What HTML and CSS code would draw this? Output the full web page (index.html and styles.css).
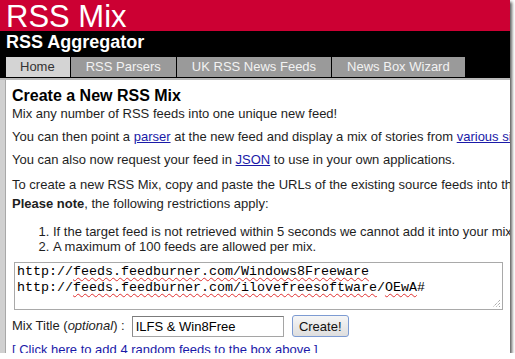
FILE: index.html
```html
<!DOCTYPE html>
<html lang="en">
<head>
  <meta charset="UTF-8">
  <title>RSS Mix</title>
  <link rel="stylesheet" href="styles.css">
</head>
<body>
  <div class="frame">
    <div class="brand">RSS Mix</div>
    <div class="band">
      <div class="tagline">RSS Aggregator</div>
      <ul class="tabs">
        <li class="tab active">Home</li>
        <li class="tab">RSS Parsers</li>
        <li class="tab">UK RSS News Feeds</li>
        <li class="tab">News Box Wizard</li>
      </ul>
    </div>
    <div class="rule"></div>

    <div class="main">
      <div class="content">
        <h1>Create a New RSS Mix</h1>
        <p>Mix any number of RSS feeds into one unique new feed!</p>
        <p>You can then point a <a href="#">parser</a> at the new feed and display a mix of stories from <a href="#">various sites</a> on your own web page.</p>
        <p>You can also now request your feed in <a href="#">JSON</a> to use in your own applications.</p>
        <p class="wide">To create a new RSS Mix, copy and paste the URLs of the existing source feeds into the box below, one per line.</p>
        <p class="note"><b>Please note</b>, the following restrictions apply:</p>
        <ol class="rules">
          <li>If the target feed is not retrieved within 5 seconds we cannot add it into your mix.</li>
          <li>A maximum of 100 feeds are allowed per mix.</li>
        </ol>

        <div class="feeds">
          <div>http://<span class="typo">feeds.feedburner.com/Windows8Freeware</span></div>
          <div>http://<span class="typo">feeds.feedburner.com/ilovefreesoftware</span>/<span class="typo">OEwA</span>#</div>
          <svg class="grip" width="9" height="9" viewBox="0 0 9 9">
            <path d="M8 1 L1 8 M8 4 L4 8 M8 7 L7 8" stroke="#888" stroke-width="1" stroke-dasharray="1 1"/>
          </svg>
        </div>

        <div class="title-row">
          <label>Mix Title (<i>optional</i>) :</label>
          <input class="title-input" type="text" value="ILFS &amp; Win8Free">
          <button class="create">Create!</button>
        </div>

        <a class="random" href="#">[ Click here to add 4 random feeds to the box above ]</a>
      </div>
    </div>
  </div>
</body>
</html>
```

FILE: styles.css
```css
body {
  margin: 0;
  background-color: #ffffff;
  font-family: "Liberation Sans", Arial, sans-serif;
}
.frame {
  width: 510px;
  height: 353px;
  overflow: hidden;
  display: flex;
  flex-direction: column;
  box-shadow: 2px 2px 3px rgba(0, 0, 0, 0.65);
}

/* Kopfbereich */
.brand {
  height: 31px;
  padding: 1px 0 0 6px;
  box-sizing: border-box;
  background-color: #cc0033;
  color: #ffffff;
  font-size: 31px;
  line-height: 31px;
}
.band {
  background-color: #000000;
  padding: 0 0 1px 6px;
}
.tagline {
  color: #ffffff;
  font-size: 18px;
  font-weight: bold;
  line-height: 22px;
}
.tabs {
  display: flex;
  gap: 1px;
  margin: 4px 0 0 0;
  padding: 0;
  list-style: none;
}
.tab {
  height: 20px;
  line-height: 20px;
  padding: 0 15px;
  background-color: #9a9a9a;
  color: #f2f2f2;
  font-size: 13px;
}
.tab.active {
  padding: 0 15px 0 14px;
  background-color: #d4d4d4;
  color: #333333;
}
.rule {
  height: 2px;
  background-color: #b9b9b9;
}

/* Inhalt */
.main {
  flex: 1;
  padding-left: 5px;
  background-color: #d0d0d0;
  min-height: 0;
}
.content {
  height: 100%;
  background-color: #ffffff;
  border-left: 1px solid #a8a8a8;
  padding: 0 6px;
  color: #1e1e1e;
  font-size: 13px;
  line-height: 16px;
  white-space: nowrap;
  overflow: hidden;
}
h1 {
  margin: 6px 0 0 0;
  font-size: 16px;
  line-height: 19px;
  color: #000000;
}
p {
  margin: 7px 0 0 0;
}
h1 + p {
  margin-top: 1px;
}
p.wide {
  margin-top: 9px;
}
p.note {
  margin-top: 3px;
}
a {
  color: #1a1aa8;
}
.rules {
  margin: 12px 0 0 0;
  padding-left: 41px;
  line-height: 15px;
}

.feeds {
  position: relative;
  width: 489px;
  height: 48px;
  box-sizing: border-box;
  margin: 8px 0 0 2px;
  padding: 1px 2px;
  border: 1px solid #a9a9a9;
  font-family: "Liberation Mono", "Courier New", monospace;
  font-size: 13.33px;
  line-height: 16px;
  color: #000000;
}
.typo {
  text-decoration: underline wavy #e03030;
  text-decoration-thickness: 1px;
  text-underline-offset: 2px;
}
.grip {
  position: absolute;
  right: 1px;
  bottom: 1px;
}

.title-row {
  display: flex;
  align-items: center;
  height: 22px;
  margin-top: 5px;
}
.title-row label {
  margin-right: 7px;
}
.title-input {
  width: 152px;
  height: 21px;
  box-sizing: border-box;
  margin: 0;
  padding: 0 3px;
  border: 1px solid #a5a5a5;
  border-top-color: #7b7b7b;
  border-left-color: #8a8a8a;
  font-family: "Liberation Sans", Arial, sans-serif;
  font-size: 13px;
  color: #000000;
}
.create {
  width: 57px;
  height: 22px;
  margin: 0 0 0 8px;
  padding: 0;
  border: 1px solid #7d9bd2;
  border-radius: 3px;
  background: linear-gradient(#f6f6f6, #dedede);
  font-family: "Liberation Sans", Arial, sans-serif;
  font-size: 13px;
  color: #111111;
}
.random {
  display: block;
  margin-top: 5px;
}
```
